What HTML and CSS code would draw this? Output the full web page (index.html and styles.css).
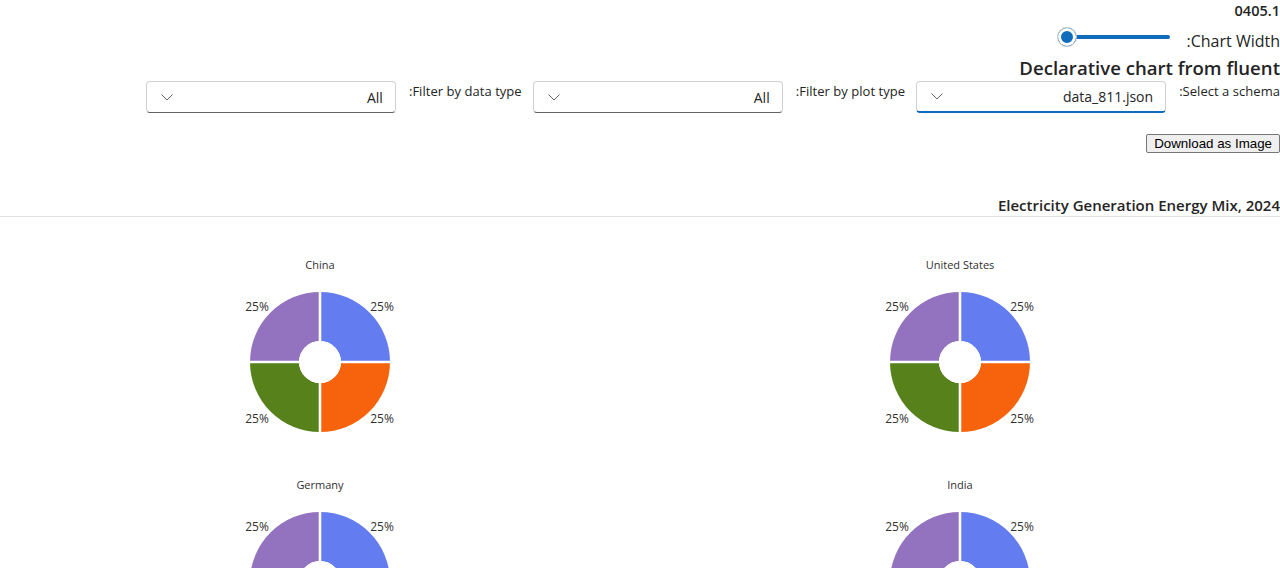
FILE: index.html
```html
<!DOCTYPE html>
<html lang="en" dir="rtl">
<head>
<meta charset="utf-8">
<title>Declarative chart</title>
<link rel="stylesheet" href="styles.css">
</head>
<body>
<svg class="defs" aria-hidden="true">
  <symbol id="donut" viewBox="-80 -80 160 160">
    <path d="M0,-70 A70,70 0 0 1 70,0 L21,0 A21,21 0 0 0 0,-21 Z" fill="#637cef"/>
    <path d="M70,0 A70,70 0 0 1 0,70 L0,21 A21,21 0 0 0 21,0 Z" fill="#f7630c"/>
    <path d="M0,70 A70,70 0 0 1 -70,0 L-21,0 A21,21 0 0 0 0,21 Z" fill="#57811b"/>
    <path d="M-70,0 A70,70 0 0 1 0,-70 L0,-21 A21,21 0 0 0 -21,0 Z" fill="#9373c0"/>
    <g stroke="#fff" stroke-width="2.6" stroke-linecap="round">
      <line x1="0" y1="-72" x2="0" y2="72"/>
      <line x1="-72" y1="0" x2="72" y2="0"/>
    </g>
    <circle r="21" fill="#fff"/>
    <g class="pct" text-anchor="middle" dominant-baseline="central">
      <text x="62" y="-56">25%</text>
      <text x="62" y="56">25%</text>
      <text x="-63" y="56">25%</text>
      <text x="-63" y="-56">25%</text>
    </g>
  </symbol>
</svg>

<div class="version">0405.1</div>

<div class="width-row">
  <label class="width-label">Chart Width:</label>
  <div class="slider">
    <div class="slider-track"></div>
    <div class="slider-thumb"></div>
  </div>
</div>

<h2 class="page-title">Declarative chart from fluent</h2>

<div class="filters">
  <div class="field">
    <label class="field-label">Select a schema:</label>
    <div class="dropdown is-focused">
      <span class="dropdown-value">data_811.json</span>
      <svg class="chevron" viewBox="0 0 12 7"><path d="M0.5,0.5 L6,6 L11.5,0.5"/></svg>
    </div>
  </div>
  <div class="field">
    <label class="field-label">Filter by plot type:</label>
    <div class="dropdown">
      <span class="dropdown-value">All</span>
      <svg class="chevron" viewBox="0 0 12 7"><path d="M0.5,0.5 L6,6 L11.5,0.5"/></svg>
    </div>
  </div>
  <div class="field">
    <label class="field-label">Filter by data type:</label>
    <div class="dropdown">
      <span class="dropdown-value">All</span>
      <svg class="chevron" viewBox="0 0 12 7"><path d="M0.5,0.5 L6,6 L11.5,0.5"/></svg>
    </div>
  </div>
</div>

<div class="actions">
  <button class="download" type="button">Download as Image</button>
</div>

<div class="chart">
  <div class="chart-title">Electricity Generation Energy Mix, 2024</div>
  <div class="subplots" dir="ltr">
    <div class="subplot">
      <div class="subplot-title">China</div>
      <svg class="donut" width="160" height="160"><use href="#donut" x="0" y="0" width="160" height="160"/></svg>
    </div>
    <div class="subplot">
      <div class="subplot-title">United States</div>
      <svg class="donut" width="160" height="160"><use href="#donut" x="0" y="0" width="160" height="160"/></svg>
    </div>
    <div class="subplot">
      <div class="subplot-title">Germany</div>
      <svg class="donut" width="160" height="160"><use href="#donut" x="0" y="0" width="160" height="160"/></svg>
    </div>
    <div class="subplot">
      <div class="subplot-title">India</div>
      <svg class="donut" width="160" height="160"><use href="#donut" x="0" y="0" width="160" height="160"/></svg>
    </div>
  </div>
</div>
</body>
</html>
```

FILE: styles.css
```css
html, body {
  margin: 0;
  padding: 0;
  background: #fff;
}

body {
  font-family: "Open Sans", "Noto Sans", sans-serif;
  color: #242424;
  overflow: hidden;
}

.defs {
  position: absolute;
  width: 0;
  height: 0;
  overflow: hidden;
}

.version {
  font-size: 14.5px;
  font-weight: 600;
  line-height: 22px;
  height: 22px;
}

.width-row {
  display: flex;
  align-items: flex-start;
  height: 32px;
}

.width-label {
  font-size: 16px;
  line-height: 20px;
  margin-top: 9px;
}

.slider {
  position: relative;
  width: 120px;
  height: 20px;
  margin-top: 5px;
  margin-inline-start: 10px;
}

.slider-track {
  position: absolute;
  top: 8px;
  right: 7px;
  left: 10px;
  height: 4px;
  border-radius: 2px;
  background: #0f6cbd;
}

.slider-thumb {
  position: absolute;
  top: 0;
  left: 0;
  width: 20px;
  height: 20px;
  box-sizing: border-box;
  border-radius: 50%;
  background: #0f6cbd;
  border: 1px solid #c7c7c7;
  box-shadow: inset 0 0 0 3px #fff;
}

.page-title {
  margin: 0;
  font-size: 18.6px;
  font-weight: 600;
  line-height: 27px;
  height: 27px;
}

.filters {
  display: flex;
  align-items: flex-start;
  gap: 11px;
}

.field {
  display: flex;
  align-items: flex-start;
  gap: 13px;
}

.field-label {
  font-size: 13px;
  line-height: 20px;
  letter-spacing: 0.04px;
}

.dropdown {
  width: 250px;
  height: 32px;
  box-sizing: border-box;
  display: flex;
  align-items: center;
  justify-content: space-between;
  padding: 0 12px 0 14px;
  border: 1px solid #d1d1d1;
  border-bottom-color: #616161;
  border-radius: 4px;
  background: #fff;
}

.dropdown.is-focused {
  border-bottom: 2px solid #0f6cbd;
}

.dropdown-value {
  font-size: 14px;
  color: #242424;
}

.chevron {
  width: 12px;
  height: 7px;
  fill: none;
  stroke: #616161;
  stroke-width: 1;
}

.actions {
  margin-top: 21px;
  display: flex;
}

.download {
  font-family: "Liberation Sans", Arial, sans-serif;
  font-size: 13.333px;
  color: #000;
  background: #efefef;
  border: 1px solid #767676;
  border-radius: 2px;
  padding: 1px 7px;
  height: 19px;
  line-height: 15px;
}

.chart {
  margin-top: 41px;
}

.chart-title {
  font-size: 15px;
  font-weight: 600;
  line-height: 21px;
  padding-top: 1px;
  border-bottom: 1px solid #e1e1e1;
}

.subplots {
  display: grid;
  grid-template-columns: 1fr 1fr;
  row-gap: 35px;
  padding-top: 40px;
}

.subplot {
  display: flex;
  flex-direction: column;
  align-items: center;
}

.subplot-title {
  font-size: 11px;
  line-height: 16px;
  color: #323130;
}

.donut {
  display: block;
  width: 160px;
  height: 160px;
  margin-top: 9px;
}

.pct {
  font-family: "Open Sans", "Noto Sans", sans-serif;
  font-size: 12px;
  fill: #323130;
}
```
